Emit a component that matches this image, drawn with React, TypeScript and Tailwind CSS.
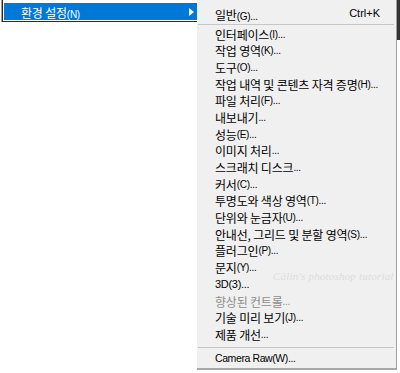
const kr = "font-['Noto_Sans_CJK_KR','Noto_Sans',sans-serif]";
const lat = "font-['Liberation_Sans','Noto_Sans_CJK_KR',sans-serif]";

type Item = { label: string; key?: string; disabled?: boolean };

const items: Item[] = [
  { label: "인터페이스", key: "(I)..." },
  { label: "작업 영역", key: "(K)..." },
  { label: "도구", key: "(O)..." },
  { label: "작업 내역 및 콘텐츠 자격 증명", key: "(H)..." },
  { label: "파일 처리", key: "(F)..." },
  { label: "내보내기", key: "..." },
  { label: "성능", key: "(E)..." },
  { label: "이미지 처리", key: "..." },
  { label: "스크래치 디스크", key: "..." },
  { label: "커서", key: "(C)..." },
  { label: "투명도와 색상 영역", key: "(T)..." },
  { label: "단위와 눈금자", key: "(U)..." },
  { label: "안내선, 그리드 및 분할 영역", key: "(S)..." },
  { label: "플러그인", key: "(P)..." },
  { label: "문지", key: "(Y)..." },
  { label: "", key: "3D(3)..." },
  { label: "향상된 컨트롤", key: "...", disabled: true },
  { label: "기술 미리 보기", key: "(J)..." },
  { label: "제품 개선", key: "..." },
];

const MenuRow = ({ item }: { item: Item }) => (
  <div
    className={`flex h-[16.7px] items-center pl-[18px] pr-[16px] whitespace-nowrap ${
      item.disabled ? "text-[#8d8d8d]" : "text-black"
    }`}
  >
    {item.label && (
      <span className={`${kr} text-[12px] tracking-[-0.2px] leading-none`}>
        {item.label}
      </span>
    )}
    {item.key && (
      <span
        className={`${lat} ${
          item.label ? "text-[10px]" : "text-[11px]"
        } tracking-[-0.3px] leading-none`}
      >
        {item.key}
      </span>
    )}
  </div>
);

export default function App() {
  return (
    <div className="relative flex h-[373px] w-[400px] items-start overflow-hidden bg-white">
      {/* parent menu item */}
      <div className="ml-[1px] w-[196px] border-l border-[#a0a0a0]">
        <div className="border-b border-l border-[#2a2a2a] pb-[1px] pl-[1px] pt-[3px]">
          <div className="flex h-[17px] items-center justify-between bg-[#0078d7] pl-[17px] pr-[3px] text-white">
            <span className="whitespace-nowrap">
              <span className={`${kr} text-[12px] tracking-[-0.2px] leading-none`}>
                환경 설정
              </span>
              <span className={`${lat} text-[10px] tracking-[-0.3px] leading-none`}>
                (N)
              </span>
            </span>
            <svg width="5" height="8" viewBox="0 0 5 8">
              <path d="M0 0 L5 4 L0 8 Z" fill="white" />
            </svg>
          </div>
        </div>
      </div>

      {/* submenu */}
      <div className="w-[200px] border-b-2 border-r border-b-[#a8a8a8] border-r-[#a0a0a0] bg-[#f0f0f0] pb-[2px] pt-[5.5px]">
        <div className="flex h-[16.7px] items-center justify-between pl-[18px] pr-[16px] whitespace-nowrap text-black">
          <span>
            <span className={`${kr} text-[12px] tracking-[-0.2px] leading-none`}>일반</span>
            <span className={`${lat} text-[10px] tracking-[-0.3px] leading-none`}>(G)...</span>
          </span>
          <span className={`${lat} text-[11px] leading-none`}>Ctrl+K</span>
        </div>
        <div className="my-[1.5px] ml-[1px] mr-[2px] border-t border-[#c6c6c6]" />
        {items.map((it, i) => (
          <MenuRow key={i} item={it} />
        ))}
        <div className="ml-[1px] mr-[2px] mt-[3.5px] mb-[2px] border-t border-[#c6c6c6]" />
        <div className="flex h-[16.7px] items-center pl-[18px] whitespace-nowrap text-black">
          <span className={`${lat} text-[10.5px] tracking-[-0.4px] leading-none`}>
            Camera Raw(W)...
          </span>
        </div>
      </div>

      {/* backdrop edge to the right */}
      <div className="h-[40px] w-[3px] bg-[#333]" />

      {/* watermark */}
      <div className="pointer-events-none absolute left-[273px] top-[268px] whitespace-nowrap font-['Liberation_Serif',serif] text-[11px] italic tracking-[0.2px] text-[#dcdcdc]">
        Câlin's photoshop tutorial
      </div>
    </div>
  );
}
